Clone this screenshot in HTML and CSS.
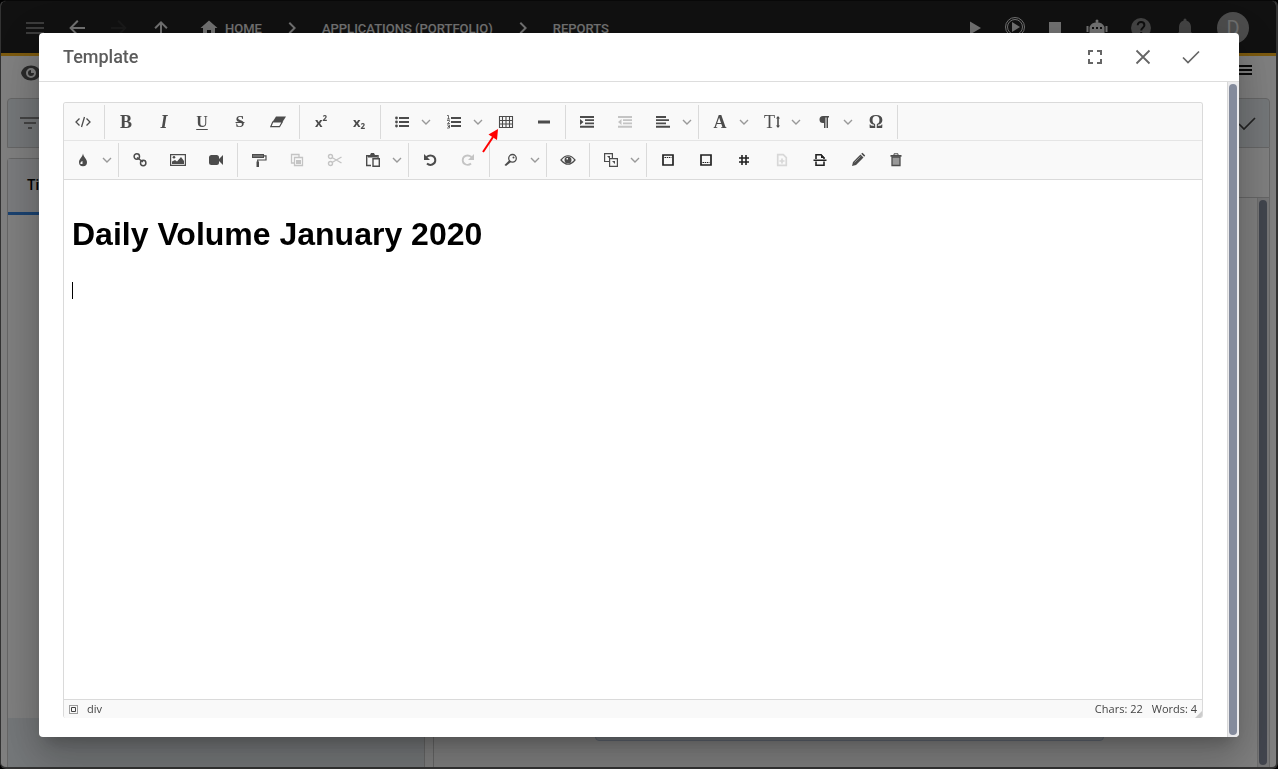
FILE: index.html
```
<!DOCTYPE html>
<html lang="en">
<head>
<meta charset="utf-8">
<title>Template</title>
<link rel="stylesheet" href="styles.css">
</head>
<body>
<div class="app">
  <header class="topbar">
    <nav class="nav" aria-label="Navigation">
      <button class="icon-btn muted" aria-label="Menu"><svg viewBox="0 0 24 24"><path d="M3 6h18v2H3zM3 11h18v2H3zM3 16h18v2H3z"/></svg></button>
      <button class="icon-btn" aria-label="Back"><svg viewBox="0 0 24 24"><path d="M20 11v2H8l5.500 5.500-1.400 1.400L4.200 12l7.900-7.900 1.400 1.400L8 11z"/></svg></button>
      <button class="icon-btn faint" aria-label="Forward"><svg viewBox="0 0 24 24"><path d="M4 11v2h12l-5.500 5.500 1.400 1.400L19.800 12l-7.900-7.900-1.400 1.400L16 11z"/></svg></button>
      <button class="icon-btn" aria-label="Up"><svg viewBox="0 0 24 24"><path d="M13 19V8.800l4.200 4.200 1.400-1.400L12 5l-6.600 6.600L6.800 13 11 8.800V19z"/></svg></button>
    </nav>
    <nav class="crumbs" aria-label="Breadcrumb">
      <a class="crumb" href="#"><svg class="icon" viewBox="0 0 24 24"><path d="M10 19v-5h4v5h4v-7h2.500L12 4.500 3.500 12H6v7z"/></svg>HOME</a>
      <svg class="icon" viewBox="0 0 24 24"><path d="M8.600 16.600 13.200 12 8.600 7.400 10 6l6 6-6 6z"/></svg>
      <a class="crumb" href="#">APPLICATIONS (PORTFOLIO)</a>
      <svg class="icon" viewBox="0 0 24 24"><path d="M8.600 16.600 13.200 12 8.600 7.400 10 6l6 6-6 6z"/></svg>
      <a class="crumb" href="#">REPORTS</a>
    </nav>
    <div class="media">
      <button class="icon-btn" aria-label="Run"><svg viewBox="0 0 24 24"><path d="M7 5.500v13l11-6.500z"/></svg></button>
      <button class="icon-btn raised" aria-label="Run all"><svg viewBox="0 0 24 24"><g fill="none" stroke="currentColor"><circle cx="12" cy="12" r="9.500"/><circle cx="12" cy="12" r="7.500"/></g><path d="M9 7v10l8-5z"/></svg></button>
      <button class="icon-btn" aria-label="Stop"><svg viewBox="0 0 24 24"><path d="M6 6h12v12H6z"/></svg></button>
    </div>
    <div class="account">
      <button class="icon-btn" aria-label="Assistant"><svg viewBox="0 0 24 24"><path fill-rule="evenodd" d="M11.500 4h1v2.200A8 8 0 0 1 19.500 11v7h-15v-7a8 8 0 0 1 7-4.800zM7 11h2v2H7zm4 0h2v2h-2zm4 0h2v2h-2zM1.500 10h2v6h-2zM20.500 10h2v6h-2z"/><circle cx="12" cy="5" r="1.500"/></svg></button>
      <button class="icon-btn dim" aria-label="Help"><svg viewBox="0 0 24 24"><circle cx="12" cy="12" r="10"/><path d="M8.700 9.200c0-4.300 6.700-4.200 6.700 0 0 2.400-3.200 2.600-3.200 5.300M12.200 16v2.500" fill="none" stroke="#1c1c1c" stroke-width="2"/></svg></button>
      <button class="icon-btn dim" aria-label="Notifications"><svg viewBox="0 0 24 24"><path d="M18 16v-5c0-3-1.600-5.600-4.500-6.300V4a1.500 1.500 0 0 0-3 0v.700C7.600 5.400 6 8 6 11v5l-2 2v1h16v-1zM10 20h4a2 2 0 0 1-4 0z"/></svg></button>
      <button class="avatar" aria-label="Account">D</button>
    </div>
  </header>
  <main class="page">
    <div class="page-tools">
      <button class="icon-btn eye" aria-label="Preview"><svg viewBox="0 0 24 24"><path fill-rule="evenodd" d="M12 4.500C7 4.500 3 7.500 2 12c1 4.500 5 7.500 10 7.500s9-3 10-7.500c-1-4.500-5-7.500-10-7.500zM12 17a5 5 0 1 1 0-10 5 5 0 0 1 0 10z"/><path d="M12 9a3 3 0 1 0 3 3h-3z"/></svg></button>
      <button class="icon-btn black" aria-label="Options"><svg viewBox="0 0 24 24"><path d="M3 7h18v2H3zM3 11h18v2H3zM3 15h18v2H3z"/></svg></button>
    </div>
    <div class="filter-bar">
      <button class="icon-btn filter" aria-label="Filter"><svg viewBox="0 0 24 24"><path d="M2 6h20v2H2zM6 11h12v2H6zM10 16h4v2h-4z"/></svg></button>
      <button class="icon-btn dark" aria-label="Apply"><svg viewBox="0 0 24 24"><path d="m4 13 5 5L20 7" fill="none" stroke="currentColor" stroke-width="1.700"/></svg></button>
    </div>
    <div class="columns">
      <section class="list-panel">
        <div class="list-head">Title</div>
        <div class="list-body"></div>
        <div class="list-foot"></div>
      </section>
      <section class="detail-panel">
        <div class="detail-head"></div>
        <div class="detail-body">
          <div class="detail-canvas"><div class="detail-box"></div></div>
          <div class="track"><div class="thumb"></div></div>
        </div>
      </section>
    </div>
  </main>
</div>

<div class="backdrop">
  <div class="modal" role="dialog" aria-labelledby="dialog-title">
    <div class="modal-head">
      <h2 class="modal-title" id="dialog-title">Template</h2>
      <div class="modal-actions">
        <button class="icon-btn" aria-label="Full screen"><svg viewBox="0 0 24 24"><path d="M5 5h5v2H7v3H5zM14 5h5v5h-2V7h-3zM5 14h2v3h3v2H5zM17 14h2v5h-5v-2h3z"/></svg></button>
        <button class="icon-btn" aria-label="Close"><svg viewBox="0 0 24 24"><path d="m5.500 5.500 13 13m0-13-13 13" fill="none" stroke="currentColor" stroke-width="1.800"/></svg></button>
        <button class="icon-btn" aria-label="Accept"><svg viewBox="0 0 24 24"><path d="m4 12.500 5 5L20 6.500" fill="none" stroke="currentColor" stroke-width="1.700"/></svg></button>
      </div>
    </div>
    <div class="modal-body">
      <div class="editor">
        <div class="tools tools-first" role="toolbar" aria-label="Text">
          <div class="group">
            <button class="tool" aria-label="Source"><svg viewBox="0 0 16 16"><path d="M4.500 4.500 1 8l3.500 3.500M11.500 4.500 15 8l-3.500 3.500M9.500 3l-3 10" fill="none" stroke="currentColor" stroke-width="1.300"/></svg></button>
          </div>
          <div class="group">
            <button class="tool glyph">B</button>
            <button class="tool glyph italic">I</button>
            <button class="tool glyph underline">U</button>
            <button class="tool glyph strike">S</button>
            <button class="tool" aria-label="Eraser"><svg viewBox="0 0 16 16"><path d="M6 2.500h10L12.500 8h-10z"/><path d="M2.700 8h9.500L9.500 12.700H.800z" fill="none" stroke="currentColor" stroke-width="1.200"/></svg></button>
          </div>
          <div class="group">
            <button class="tool script">x<sup>2</sup></button>
            <button class="tool script">x<sub>2</sub></button>
          </div>
          <div class="group">
            <button class="tool" aria-label="Bulleted list"><svg viewBox="0 0 16 16"><path d="M5 3h10v2H5zM5 7h10v2H5zM5 11h10v2H5z"/><circle cx="2.500" cy="4" r="1.400"/><circle cx="2.500" cy="8" r="1.400"/><circle cx="2.500" cy="12" r="1.400"/></svg></button>
            <button class="more" aria-label="Bullet styles"><svg viewBox="0 0 10 10"><path id="chevron" d="m1 3 4 4 4-4" fill="none" stroke="currentColor" stroke-width="1.400"/></svg></button>
            <button class="tool" aria-label="Numbered list"><svg viewBox="0 0 16 16"><path d="M5 3h10v2H5zM5 7h10v2H5zM5 11h10v2H5z"/><path d="M1 1.500h1.500V5M1 5h3M1 6.500h2.500v1L1.500 9.500H4M1 11h2.500v1.500H2h1.500V14H1" fill="none" stroke="currentColor" stroke-width=".8"/></svg></button>
            <button class="more" aria-label="Number styles"><svg viewBox="0 0 10 10"><use href="#chevron"/></svg></button>
            <button class="tool table-tool" aria-label="Table"><svg viewBox="0 0 16 16"><path d="M1.500 2.500h13v11h-13zM1.500 6.500h13M1.500 10h13M4.500 2.500v11M8 2.500v11M11.500 2.500v11" fill="none" stroke="currentColor" stroke-width="1.100"/></svg><svg class="pointer" viewBox="0 0 18 28"><path d="M1 25 11 10" stroke="#f00" stroke-width="2"/><path d="M16 2 15 13 6.500 7.500z" fill="#f00"/></svg></button>
            <button class="tool" aria-label="Line"><svg viewBox="0 0 16 16"><path d="M2 6.500h12v3H2z"/></svg></button>
          </div>
          <div class="group">
            <button class="tool" aria-label="Indent"><svg viewBox="0 0 16 16"><path d="M1 2h14v2H1zM6 5.200h9v1.900H6zM6 8.400h9v1.900H6zM1 11.700h14v2H1zM1 5l3.500 3L1 11z"/></svg></button>
            <button class="tool" aria-label="Outdent" disabled><svg viewBox="0 0 16 16"><path d="M1 2h14v2H1zM6 5.200h9v1.900H6zM6 8.400h9v1.900H6zM1 11.700h14v2H1zM4.500 5 1 8l3.500 3z"/></svg></button>
            <button class="tool" aria-label="Align"><svg viewBox="0 0 16 16"><path d="M1 2h10v2H1zM1 5.200h13v1.900H1zM1 8.400h10v1.900H1zM1 11.700h14v2H1z"/></svg></button>
            <button class="more" aria-label="Alignments"><svg viewBox="0 0 10 10"><use href="#chevron"/></svg></button>
          </div>
          <div class="group">
            <button class="tool glyph">A</button>
            <button class="more" aria-label="Fonts"><svg viewBox="0 0 10 10"><use href="#chevron"/></svg></button>
            <button class="tool glyph size">T<svg class="updown" viewBox="0 0 4 12"><path d="M0 2.500 2 0l2 2.500H2.800v7H4L2 12 0 9.500h1.200v-7z"/></svg></button>
            <button class="more" aria-label="Sizes"><svg viewBox="0 0 10 10"><use href="#chevron"/></svg></button>
            <button class="tool" aria-label="Paragraph format"><svg viewBox="0 0 16 16"><path d="M7 2h6v1.500h-1V14h-1.500V3.500h-1V14H8V9H7a3.500 3.500 0 0 1 0-7z"/></svg></button>
            <button class="more" aria-label="Formats"><svg viewBox="0 0 10 10"><use href="#chevron"/></svg></button>
            <button class="tool glyph">Ω</button>
          </div>
        </div>
        <div class="tools" role="toolbar" aria-label="Document">
          <div class="group">
            <button class="tool" aria-label="Color"><svg viewBox="0 0 16 16"><path fill-rule="evenodd" d="M8 1.500C7.500 5 4 7 4 10.200a4 4 0 0 0 8 0C12 7 8.500 5 8 1.500zM7.500 9v3h-2c-.5-1.500.5-2.500 2-3z"/></svg></button>
            <button class="more" aria-label="Colors"><svg viewBox="0 0 10 10"><use href="#chevron"/></svg></button>
          </div>
          <div class="group">
            <button class="tool" aria-label="Link"><svg viewBox="0 0 16 16"><g fill="none" stroke="currentColor" stroke-width="1.500"><circle cx="4.800" cy="4.500" r="2.700"/><circle cx="11.200" cy="11" r="2.700"/><path d="m5 5.500 6 4.500"/></g></svg></button>
            <button class="tool" aria-label="Image"><svg viewBox="0 0 16 16"><path d="M.6 2.600h14.800v10.800H.6z" fill="none" stroke="currentColor" stroke-width="1.200"/><path d="M2 12V9.500L5 8l2 1.500L11 5l3 4v3z"/><circle cx="4" cy="5.300" r="1.300"/></svg></button>
            <button class="tool" aria-label="Video"><svg viewBox="0 0 16 16"><rect x="1" y="3" width="10" height="10" rx="2.500"/><path d="m10 8 5-5v10z"/></svg></button>
          </div>
          <div class="group">
            <button class="tool" aria-label="Copy formatting"><svg viewBox="0 0 16 16"><path d="M1 2h12v4H1zM5.500 9.500H8V15H5.500z"/><path d="M13 3.800h2V8H6.700v2" fill="none" stroke="currentColor" stroke-width="1.200"/><path d="M2 4h10" stroke="#999"/></svg></button>
            <button class="tool" aria-label="Copy" disabled><svg viewBox="0 0 16 16"><path d="M5 11H2.500V2.500H10V5M5.500 5.500h8v8h-8z" fill="none" stroke="currentColor" stroke-width="1.300"/><path d="M7 8h5v4H7z"/></svg></button>
            <button class="tool" aria-label="Cut" disabled><svg viewBox="0 0 16 16"><g fill="none" stroke="currentColor" stroke-width="1.400"><circle cx="3.500" cy="4.500" r="2"/><circle cx="3.500" cy="11.500" r="2"/><path d="m5 5.500 9.500 5.500M5 10.500 14.500 5"/></g></svg></button>
            <button class="tool" aria-label="Paste"><svg viewBox="0 0 16 16"><path d="M6 13.500H1.700V3.700H13V6M8 6.700h6.300v7.600H8z" fill="none" stroke="currentColor" stroke-width="1.400"/><path d="M3 3h2l1-2h3l1 2h2v2.500H3z"/></svg></button>
            <button class="more" aria-label="Paste options"><svg viewBox="0 0 10 10"><use href="#chevron"/></svg></button>
          </div>
          <div class="group">
            <button class="tool" aria-label="Undo"><svg viewBox="0 0 16 16"><path d="M4.500 5C8.500 2 13.300 4 13.300 8.300c0 4.200-5.300 6-8.300 3.200" fill="none" stroke="currentColor" stroke-width="2"/><path d="M2 2v6h6z"/></svg></button>
            <button class="tool" aria-label="Redo" disabled><svg viewBox="0 0 16 16"><path d="M11.500 5C7.500 2 2.700 4 2.700 8.300c0 4.200 5.300 6 8.300 3.200" fill="none" stroke="currentColor" stroke-width="1.800"/><path d="M14 2v6H8z"/></svg></button>
          </div>
          <div class="group">
            <button class="tool" aria-label="Find"><svg viewBox="0 0 16 16"><circle cx="9.500" cy="6.300" r="3.800" fill="none" stroke="currentColor" stroke-width="1.300"/><path d="M6.500 8 8 10l-5 4-1.500-1z"/><circle cx="10.500" cy="5.500" r="1"/></svg></button>
            <button class="more" aria-label="Find options"><svg viewBox="0 0 10 10"><use href="#chevron"/></svg></button>
          </div>
          <div class="group">
            <button class="tool" aria-label="Preview"><svg viewBox="0 0 16 16"><path d="M1 8q7-8.500 14 0-7 8.500-14 0z" fill="none" stroke="currentColor" stroke-width="1.200"/><path fill-rule="evenodd" d="M8 4.500a3.500 3.500 0 1 1 0 7 3.500 3.500 0 0 1 0-7zM6.500 6v1.500H8V6z"/></svg></button>
          </div>
          <div class="group">
            <button class="tool" aria-label="Placeholders"><svg viewBox="0 0 16 16"><path d="M6 9.500H1.600V1.600h7.800V6M6.600 6.600h7.800v7.800H6.600z" fill="none" stroke="currentColor" stroke-width="1.200"/><path d="M4 4h3v3zM9 9h3v3z"/></svg></button>
            <button class="more" aria-label="Placeholder list"><svg viewBox="0 0 10 10"><use href="#chevron"/></svg></button>
          </div>
          <div class="group group-last">
            <button class="tool strong" aria-label="Header"><svg viewBox="0 0 16 16"><path d="M3 3h10v10H3z" fill="none" stroke="currentColor" stroke-width="1.700"/><path d="M4.500 5.500h7" stroke="currentColor" stroke-dasharray="1.500 .7"/></svg></button>
            <button class="tool strong" aria-label="Footer"><svg viewBox="0 0 16 16"><path d="M3 3h10v10H3z" fill="none" stroke="currentColor" stroke-width="1.700"/><path d="M4.500 10.500h7" stroke="currentColor" stroke-dasharray="1.500 .7"/></svg></button>
            <button class="tool strong" aria-label="Page number"><svg viewBox="0 0 16 16"><path d="M6 3v10M10 3v10M3 6h10M3 10h10" fill="none" stroke="currentColor" stroke-width="1.600"/></svg></button>
            <button class="tool faded" aria-label="Add page" disabled><svg viewBox="0 0 16 16"><path d="M3.700 2.700h5.600l3 3v7.600H3.700zM8 6.500v5M5.500 9h5" fill="none" stroke="currentColor" stroke-width="1.700"/></svg></button>
            <button class="tool strong" aria-label="Page break"><svg viewBox="0 0 16 16"><path d="M4 7V2.800h5L12 6v1M4 9.500v3.700h8V9.500M1.500 8.200h13" fill="none" stroke="currentColor" stroke-width="1.600"/><path d="M9 2v4h4z"/></svg></button>
            <button class="tool" aria-label="Edit"><svg viewBox="0 0 16 16"><path d="m2 14 1-4 7.500-7.500 3 3L6 13zM11.200 1.800 12.500.8l2.700 2.700-1 1.300z"/><path d="m4.500 10.500 6-6" stroke="#aaa" stroke-width=".7"/></svg></button>
            <button class="tool" aria-label="Delete"><svg viewBox="0 0 16 16"><path d="M4 5h8v8.500H4z" fill="#999" stroke="currentColor" stroke-width="1.300"/><path d="M2.500 3h11v1.800h-11z"/><path d="M6 3V1.800h4V3" fill="none" stroke="currentColor"/></svg></button>
          </div>
        </div>
        <div class="canvas" contenteditable="true" role="textbox" aria-label="Template text">
          <h1>Daily Volume January 2020</h1>
          <div class="caret"></div>
        </div>
        <div class="status">
          <button class="select-all" aria-label="Select block"><svg viewBox="0 0 9 9"><path d="M.5.500h8v8h-8z" fill="none" stroke="currentColor" stroke-dasharray="1 1"/><path d="M2.500 2.500h4v4h-4z" fill="none" stroke="currentColor"/></svg></button>
          <a class="path" href="#">div</a>
          <span>Chars: 22</span>
          <span>Words: 4</span>
          <svg class="grip" viewBox="0 0 7 7"><path d="M7 0v7H0z"/></svg>
        </div>
      </div>
    </div>
    <div class="track track-modal"><div class="thumb"></div></div>
  </div>
</div>
</body>
</html>
```

FILE: styles.css
```
* { box-sizing: border-box; }
body {
  margin: 0;
  height: 100vh;
  overflow: hidden;
  background: #000;
  font-family: Roboto, sans-serif;
}
button {
  margin: 0;
  padding: 0;
  border: 0;
  background: none;
  color: inherit;
  font: inherit;
}
a { color: inherit; text-decoration: none; }
svg { display: block; fill: currentColor; }

.icon-btn, .icon { flex: none; width: 24px; height: 24px; }
.icon-btn svg { width: 24px; height: 24px; }

/* Application behind the dialog */
.app {
  display: flex;
  flex-direction: column;
  height: 100vh;
  border: 1px solid #666;
  border-width: 1px 2px 2px 1px;
  border-top-color: #111;
  border-radius: 6px;
  background: #fff;
  overflow: hidden;
}
.topbar {
  display: flex;
  align-items: center;
  flex: none;
  height: 55px;
  padding: 2px 27px 0 22px;
  border-bottom: 3px solid #f8b41e;
  background: #222;
  color: #e4e4e4;
}
.muted { color: #777; }
.faint { color: #333; }
.dim { color: #888; }
.nav, .crumbs { display: flex; align-items: center; gap: 18px; }
.crumbs { flex: 1; margin-left: 24px; font-size: 13px; font-weight: 500; }
.crumb { display: flex; align-items: center; gap: 4px; white-space: nowrap; }
.media { display: flex; gap: 16px; margin-right: 18px; }
.raised { margin-top: -1px; }
.account { display: flex; align-items: center; gap: 20px; }
.avatar {
  width: 32px;
  height: 32px;
  border-radius: 50%;
  background: #999;
  color: #ddd;
  font-size: 20px;
}

.page { display: flex; flex: 1; flex-direction: column; min-height: 0; padding: 0 6px; }
.page-tools {
  display: flex;
  justify-content: space-between;
  flex: none;
  height: 42px;
  padding: 2px 15px 0 12px;
}
.eye { margin-top: 3px; color: #555; }
.dark { color: #444; }
.black { color: #111; }
.filter-bar {
  display: flex;
  align-items: center;
  justify-content: space-between;
  flex: none;
  height: 50px;
  padding: 0 10px;
  border: 1px solid #ccc;
  border-radius: 4px 4px 0 0;
  background: #e9eef2;
}
.filter { color: #888; }
.columns { display: grid; grid-template-columns: 1fr 2fr; gap: 8px; flex: 1; min-height: 0; }
.list-panel {
  display: flex;
  flex-direction: column;
  margin-top: 10px;
  border: 1px solid #ccc;
  border-bottom: 0;
  border-radius: 4px 4px 0 0;
}
.list-head {
  height: 56px;
  padding: 18px 19px;
  border-bottom: 3px solid #3484e0;
  background: #f5f7fa;
  font-size: 14px;
  font-weight: 500;
  line-height: 16px;
}
.list-body { flex: 1; }
.list-foot { height: 49px; background: #e9eef2; }
.detail-panel {
  display: flex;
  flex-direction: column;
  border: 1px solid #ccc;
  border-width: 0 1px;
}
.detail-head { height: 50px; border-bottom: 1px solid #ccc; }
.detail-body { display: flex; flex: 1; }
.detail-canvas {
  display: flex;
  flex: 1;
  align-items: flex-end;
  padding: 0 153px 26px 161px;
}
.detail-box {
  flex: 1;
  height: 40px;
  border: 1px solid #bccbe0;
  border-radius: 4px;
  background: #e2eaf3;
}

/* Scrollbars */
.track {
  display: flex;
  width: 12px;
  padding: 2px 2px 2px 1px;
  border-left: 1px solid #d8d8d8;
  background: #ebebed;
}
.thumb { flex: 1; border-radius: 4px; background: #848b9c; }

/* Dialog */
.backdrop { position: fixed; inset: 0; display: flex; padding: 33px 39px 32px; background: rgba(0, 0, 0, .5); }
.modal {
  display: grid;
  grid-template: auto 1fr / 1fr auto;
  flex: 1;
  border-radius: 4px;
  background: #fff;
  box-shadow: 0 11px 15px -7px rgba(0, 0, 0, .2), 0 24px 38px 3px rgba(0, 0, 0, .14), 0 9px 46px 8px rgba(0, 0, 0, .12);
  overflow: hidden;
}
.modal-head {
  display: flex;
  grid-column: 1 / -1;
  align-items: center;
  justify-content: space-between;
  height: 49px;
  padding: 0 36px 0 24px;
  border-bottom: 1px solid #ddd;
  color: #666;
}
.modal-title { margin: 0 0 2px; color: #5c5c5c; font-size: 18px; font-weight: 500; }
.modal-actions { display: flex; gap: 24px; }
.modal-body { display: flex; padding: 20px 24px 19px; }
.track-modal { border-bottom-right-radius: 4px; }

/* Editor */
.editor {
  display: flex;
  flex: 1;
  flex-direction: column;
  border: 1px solid #dadada;
  border-bottom: 0;
  border-radius: 3px;
  overflow: hidden;
}
.tools { display: flex; padding: 2px 0; border-bottom: 1px solid #dadada; background: #f9f9f9; color: #4c4c4c; }
.tools-first { padding-bottom: 1px; border-color: #e5e5e5; }
.group { display: flex; padding: 0 2px; border-right: 1px solid #dadada; }
.group:first-child { padding-left: 0; }
.group-last { border-right: 0; }
.tool, .more { display: flex; align-items: center; justify-content: center; height: 34px; }
.tool { width: 38px; }
.more { width: 14px; padding-right: 4px; color: #999; }
.tool svg { width: 16px; height: 16px; }
.more svg { width: 10px; height: 10px; }
.tool:disabled { color: #c4c4c4; }
.tool.faded { color: #d8d8d8; }
.strong { color: #222; }
.glyph { font-family: "Liberation Serif", serif; font-size: 18px; font-weight: 700; }
.italic { font-style: italic; }
.underline { font-size: 16px; text-decoration: underline; text-underline-offset: 2px; }
.strike { font-size: 16px; text-decoration: line-through; }
.tool.size { gap: 1px; font-weight: 400; }
.tool .updown { width: 4px; height: 12px; }
.script { font-family: "Noto Sans", sans-serif; font-size: 13px; font-weight: 700; }
.script sup, .script sub { font-size: 8px; line-height: 8px; }
.script sup { margin-bottom: 8px; }
.script sub { margin-top: 8px; }
.table-tool { position: relative; }
.tool .pointer { position: absolute; left: -5px; top: 22px; width: 18px; height: 28px; }

.canvas {
  flex: 1;
  padding: 14px 8px;
  outline: 0;
  color: #000;
  font: 16px "Liberation Sans", sans-serif;
}
.canvas h1 { margin: 21px 0 29px; font-size: 32px; line-height: 38px; }
.caret { width: 1px; height: 17px; background: #000; }

.status {
  display: flex;
  align-items: center;
  gap: 9px;
  height: 19px;
  padding: 0 5px;
  border-top: 1px solid #dadada;
  background: #f9f9f9;
  color: #444;
  font: 11px/15px "Open Sans", sans-serif;
}
.status a, .status span { padding-bottom: 2px; }
.select-all svg { width: 9px; height: 9px; }
.path { flex: 1; }
.grip { align-self: flex-end; width: 7px; height: 7px; margin: 0 -5px 0 -11px; color: #ccc; }
```
